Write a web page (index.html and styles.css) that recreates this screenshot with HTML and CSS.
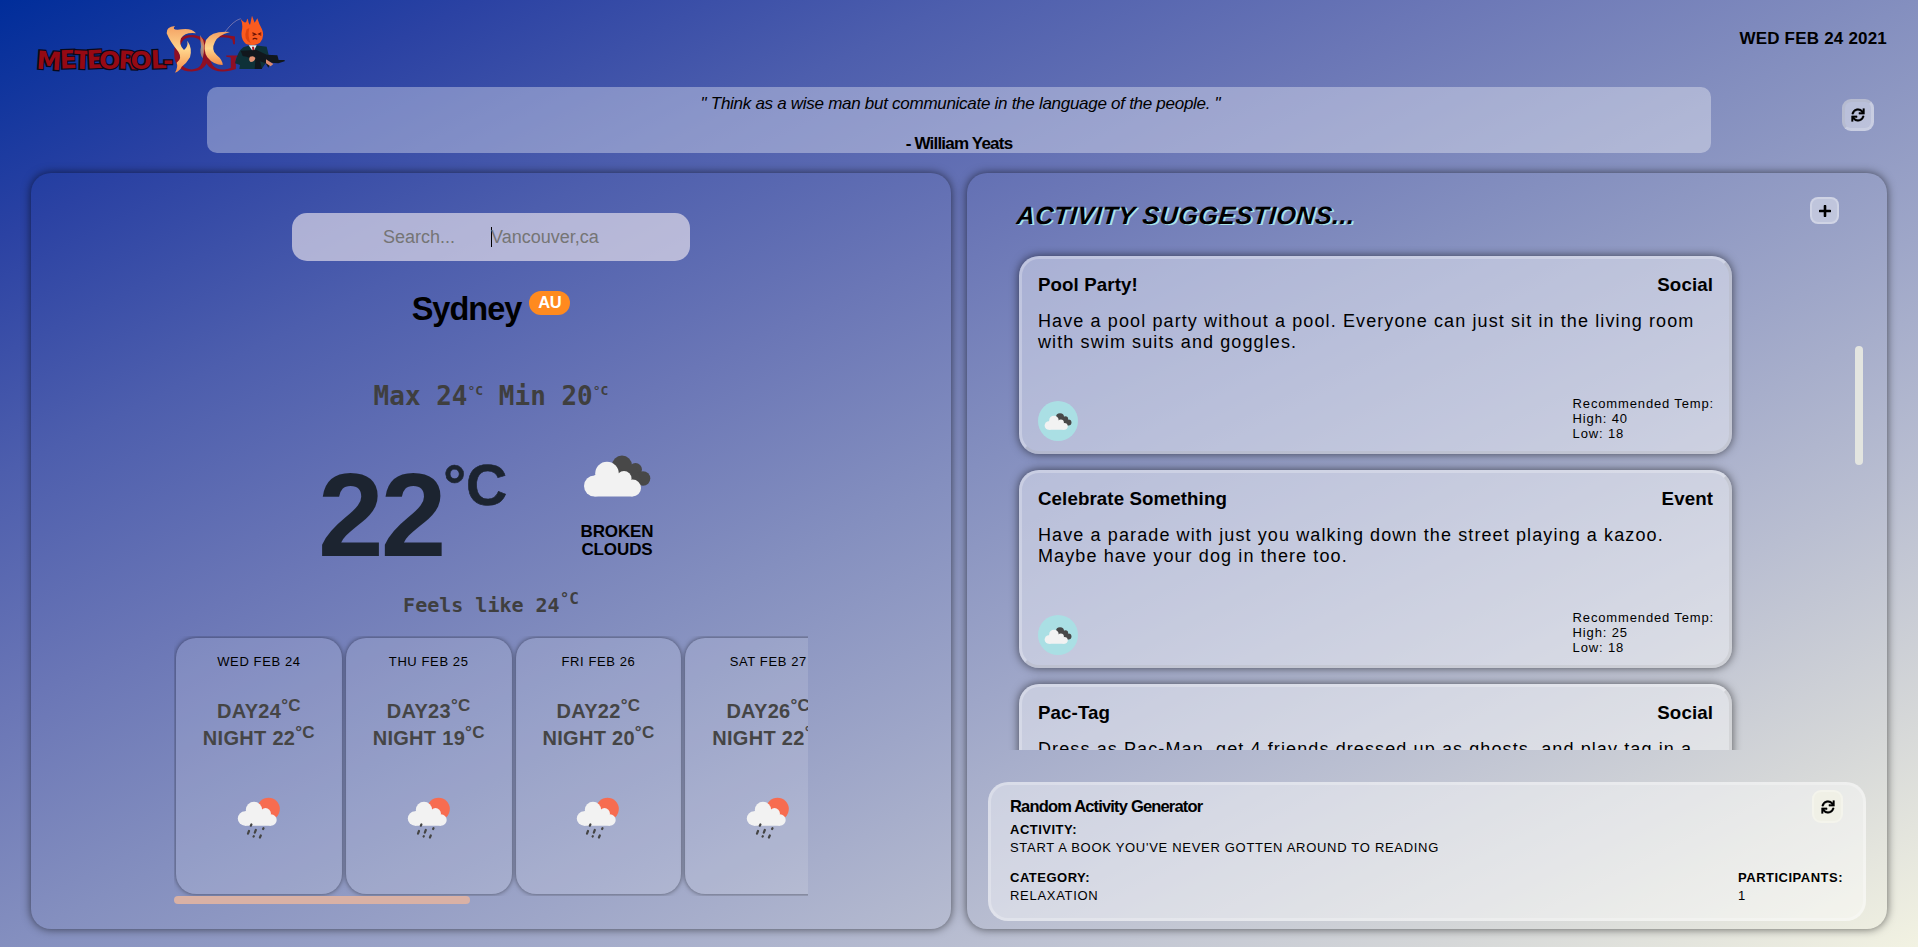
FILE: index.html
```html
<!DOCTYPE html>
<html lang="en">
<head>
<meta charset="utf-8">
<title>Meteorol-OG</title>
<link rel="stylesheet" href="styles.css">
</head>
<body>
<svg class="defs" width="0" height="0" aria-hidden="true">
  <symbol id="broken-clouds" viewBox="0 0 68 42">
    <g fill="#484848"><circle cx="39" cy="10.500" r="10"/><circle cx="52.500" cy="14.500" r="6.500"/><circle cx="60" cy="23.500" r="7.300"/><path d="M38 12h15l7 18H44z"/></g>
    <g fill="#f2f2f2"><circle cx="11.500" cy="31" r="10.500"/><circle cx="24" cy="18.500" r="11.800"/><circle cx="41" cy="23.500" r="7.500"/><circle cx="49.500" cy="33" r="8.500"/><path d="M11.500 20h30v7l8 4v10.500h-38z"/></g>
  </symbol>
  <symbol id="rain-sun" viewBox="0 0 44 44">
    <circle cx="31.500" cy="12" r="11.300" fill="#f76c50"/>
    <g fill="#f2f2f2"><circle cx="8" cy="21.500" r="7.200"/><circle cx="17" cy="13" r="8.200"/><circle cx="28.500" cy="16.500" r="5.400"/><circle cx="34" cy="23" r="5.700"/><path d="M8 14.300h21l5 4v10.400H8z"/></g>
    <g stroke="#454545" stroke-width="2.200" stroke-linecap="round"><path d="M14.400 27.500l-.6 1.200M12 34l-1 2.600M18.800 33l-1 2.600M26.500 31.200l-.4.8M16.800 39.200l-.2.400M23.800 38.500l-.9 2"/></g>
  </symbol>
  <symbol id="sync" viewBox="-16 -16 544 544">
    <path stroke="#000" stroke-width="8" d="M440.650 12.570l4 82.770A247.160 247.160 0 0 0 255.830 8C134.730 8 33.910 94.920 12.290 209.820A12 12 0 0 0 24.090 224h49.050a12 12 0 0 0 11.670-9.260 175.910 175.910 0 0 1 317-56.940l-101.460-4.860a12 12 0 0 0-12.570 12v47.410a12 12 0 0 0 12 12H500a12 12 0 0 0 12-12V12a12 12 0 0 0-12-12h-47.370a12 12 0 0 0-11.980 12.570zM255.830 432a175.610 175.610 0 0 1-146-77.800l101.800 4.870a12 12 0 0 0 12.570-12v-47.400a12 12 0 0 0-12-12H12a12 12 0 0 0-12 12V500a12 12 0 0 0 12 12h47.350a12 12 0 0 0 12-12.600l-4.150-82.570A247.170 247.170 0 0 0 255.830 504c121.110 0 221.930-86.920 243.550-201.820a12 12 0 0 0-11.800-14.180h-49.050a12 12 0 0 0-11.670 9.260A175.860 175.860 0 0 1 255.830 432z"/>
  </symbol>
</svg>

<header class="top">
  <svg class="logo" viewBox="0 0 254 62" width="254" height="62">
    <defs><linearGradient id="flame" x1="0" y1="0" x2="0" y2="1"><stop offset="0" stop-color="#f3a063"/><stop offset=".5" stop-color="#ffd68d"/><stop offset="1" stop-color="#f58c48"/></linearGradient></defs>
    <text class="logo-word" y="54.500" x="2 26 39.500 53 65 84 96.500 117 129" rotate="4 -2 2 -3 0 3 0 -2 0">METEOROL-</text>
    <text class="logo-og" x="138" y="56.500" textLength="69">OG</text>
    <g transform="translate(-34 -14) scale(.33333)">
      <g fill="url(#flame)">
        <path d="M500 100Q498 80 525 78Q512 92 545 88Q575 84 588 100Q555 96 543 115Q535 135 552 150Q565 140 562 122Q578 145 570 172Q560 190 545 200Q540 212 525 218Q535 200 530 188Q548 175 535 155Q510 125 500 100Z"/>
        <path d="M618 120Q635 92 690 96Q655 105 645 125Q632 150 650 165Q668 180 668 195Q640 195 622 172Q608 150 618 120Z"/>
        <path d="M600 105Q622 130 608 175Q598 160 603 140Z" opacity=".6"/>
      </g>
      <path d="M675 96Q700 62 722 56" stroke="#9a8db6" stroke-width="2" fill="none"/>
      <path d="M705 190Q712 155 730 142L750 136H765L800 140L806 165L800 185L785 207H718L720 195Z" fill="#0e3138"/>
      <path d="M746 136H770L760 156Z" fill="#e9edf2"/><path d="M756 140H762L764 152L758 156Z" fill="#b21b25"/>
      <path d="M722 56Q737 75 740 62Q742 48 746 68L750 75L756 47L764 68L772 55Q778 75 786 88Q795 110 780 128Q760 140 738 132Q722 118 725 95Q730 75 722 56Z" fill="#fb5b1f"/>
      <path d="M740 88Q728 118 752 130Q742 108 748 84Z" fill="#e0440f"/>
      <path d="M757 98L767 103L758 106M784 98L776 102L784 106M758 118Q764 112 772 118" stroke="#681306" stroke-width="3.500" fill="none"/>
      <path d="M722 152L770 150L800 164L832 166L836 180L854 180V184L835 190L812 188L805 203L797 190L780 184L786 207H764L766 182L740 170L728 168Z" fill="#11171d"/>
      <path d="M750 170Q762 166 766 174Q764 186 752 186Q744 180 750 170Z" fill="#e39274"/><path d="M798 178L820 192L812 199L798 190Z" fill="#dc8b70"/>
    </g>
  </svg>
  <div class="today">WED FEB 24 2021</div>
</header>

<section class="quote-row">
  <div class="quote"><p class="quote-text">" Think as a wise man but communicate in the language of the people. "</p><p class="quote-author">- William Yeats</p></div>
  <button class="btn btn-quote" aria-label="New quote"><svg width="14" height="14"><use href="#sync"/></svg></button>
</section>

<main class="panels">
  <section class="panel weather">
    <form class="search"><span>Search...</span><span class="caret"></span><span>Vancouver,ca</span></form>
    <div class="city"><h1>Sydney</h1><span class="country">AU</span></div>
    <div class="range">Max 24<sup>°C</sup> Min 20<sup>°C</sup></div>
    <div class="now">
      <div class="temp">22<sup>°C</sup></div>
      <div class="cond"><svg width="68" height="42"><use href="#broken-clouds"/></svg><span>BROKEN CLOUDS</span></div>
    </div>
    <div class="feels">Feels like 24<sup>°C</sup></div>
    <div class="forecast">
      <div class="days">
        <article class="day"><time>WED FEB 24</time><p>DAY24<sup>°C</sup><br>NIGHT 22<sup>°C</sup></p><svg width="44" height="44"><use href="#rain-sun"/></svg></article>
        <article class="day"><time>THU FEB 25</time><p>DAY23<sup>°C</sup><br>NIGHT 19<sup>°C</sup></p><svg width="44" height="44"><use href="#rain-sun"/></svg></article>
        <article class="day"><time>FRI FEB 26</time><p>DAY22<sup>°C</sup><br>NIGHT 20<sup>°C</sup></p><svg width="44" height="44"><use href="#rain-sun"/></svg></article>
        <article class="day"><time>SAT FEB 27</time><p>DAY26<sup>°C</sup><br>NIGHT 22<sup>°C</sup></p><svg width="44" height="44"><use href="#rain-sun"/></svg></article>
      </div>
      <div class="bar-x"></div>
    </div>
  </section>

  <section class="panel activities">
    <div class="act-head"><h2>ACTIVITY SUGGESTIONS...</h2><button class="btn btn-add" aria-label="Add activity"><svg width="12" height="12" viewBox="0 0 12 12"><path d="M6 1v10M1 6h10" stroke="#000" stroke-width="2.600" stroke-linecap="round"/></svg></button></div>
    <div class="act-body">
      <div class="act-list">
        <article class="act">
          <div class="act-row"><h3>Pool Party!</h3><h3>Social</h3></div>
          <p>Have a pool party without a pool. Everyone can just sit in the living room with swim suits and goggles.</p>
          <div class="act-foot"><span class="badge"><svg width="28" height="17"><use href="#broken-clouds"/></svg></span><div class="rec">Recommended Temp:<br>High: 40<br>Low: 18</div></div>
        </article>
        <article class="act">
          <div class="act-row"><h3>Celebrate Something</h3><h3>Event</h3></div>
          <p>Have a parade with just you walking down the street playing a kazoo. Maybe have your dog in there too.</p>
          <div class="act-foot"><span class="badge"><svg width="28" height="17"><use href="#broken-clouds"/></svg></span><div class="rec">Recommended Temp:<br>High: 25<br>Low: 18</div></div>
        </article>
        <article class="act">
          <div class="act-row"><h3>Pac-Tag</h3><h3>Social</h3></div>
          <p>Dress as Pac-Man, get 4 friends dressed up as ghosts, and play tag in a</p>
        </article>
      </div>
      <div class="bar-y"></div>
    </div>
    <div class="random">
      <div class="rand-head"><h4>Random Activity Generator</h4><button class="btn btn-rand" aria-label="New activity"><svg width="14" height="14"><use href="#sync"/></svg></button></div>
      <div class="field activity"><b>ACTIVITY:</b><span>START A BOOK YOU'VE NEVER GOTTEN AROUND TO READING</span></div>
      <div class="rand-foot">
        <div class="field"><b>CATEGORY:</b><span>RELAXATION</span></div>
        <div class="field"><b>PARTICIPANTS:</b><span>1</span></div>
      </div>
    </div>
  </section>
</main>
</body>
</html>
```
FILE: styles.css
```css
* { box-sizing: border-box; margin: 0; padding: 0; }
body {
  height: 947px;
  overflow: hidden;
  font-family: "Liberation Sans", Arial, sans-serif;
  color: #000;
  background: linear-gradient(to right bottom, #002d9a 0%, #2b42a3 12.5%, #4d5ead 25%, #6a76b6 37.5%, #848fbf 50%, #9ea6c8 62.5%, #b9bed1 75%, #d5d7d8 87.5%, #f2f2e2 100%);
}
.defs { display: block; }
sup { line-height: 0; vertical-align: baseline; position: relative; }

.top { height: 87px; display: flex; justify-content: space-between; align-items: flex-start; padding: 14px 31px 0 34px; }
.logo { overflow: visible; }
.logo-word { font: bold 25px "DejaVu Sans", sans-serif; fill: #960913; stroke: #07091c; stroke-width: 2.5px; paint-order: stroke; }
.logo-og { font: 54px "Liberation Serif", serif; fill: #8f0f24; }
.today { font-size: 17px; line-height: 20px; font-weight: bold; letter-spacing: .2px; padding-top: 15px; }

.quote-row { height: 86px; display: flex; align-items: flex-start; padding: 0 44px 0 207px; justify-content: space-between; }
.quote { width: 1504px; height: 66px; border-radius: 10px; background: rgba(255,255,255,.35); text-align: center; font-size: 17px; line-height: 20px; padding-top: 7px; }
.quote-text { font-style: italic; letter-spacing: -.28px; padding-left: 3px; }
.quote-author { font-weight: bold; letter-spacing: -.8px; margin-top: 20px; }
.btn { display: flex; align-items: center; justify-content: center; border-radius: 9px; }
.btn-quote { width: 32px; height: 32px; margin-top: 12px; background: rgba(255,255,255,.4); border: 3px inset rgba(255,255,255,.2); }

.panels { height: 756px; display: flex; gap: 16px; padding: 0 31px 0 31px; }
.panel { flex: 1; border-radius: 20px; box-shadow: 0 0 10px rgba(0,0,0,.6); display: flex; flex-direction: column; }

.weather { align-items: center; }
.search { width: 398px; height: 48px; margin-top: 40px; border-radius: 15px; background: rgba(248,240,244,.6); display: flex; align-items: center; padding-left: 91px; font-size: 18px; color: #757575; }
.caret { width: 1px; height: 20px; background: #000; margin: 0 -1px 0 36px; }
.city { display: flex; gap: 8px; align-items: flex-start; margin-top: 30px; }
.city h1 { font-size: 32.500px; line-height: 36px; letter-spacing: -1px; }
.country { width: 41px; text-align: center; height: 24px; border-radius: 12px; background: #ff8a1f; color: #fff; font-weight: bold; font-size: 16.500px; letter-spacing: -.3px; line-height: 22px; }
.range, .feels { font-family: "DejaVu Sans Mono", monospace; font-weight: bold; color: #3f3f3f; white-space: pre; }
.range { font-size: 26px; line-height: 30px; margin-top: 54px; }
.range sup { font-size: 13px; top: -10px; }
.now { width: 336px; height: 120px; margin: 44px 0 0 -10px; display: flex; justify-content: space-between; }
.temp { font-size: 118px; line-height: 120px; font-weight: bold; color: #1c2430; letter-spacing: -3px; white-space: nowrap; }
.temp sup { font-size: 57px; top: -51px; letter-spacing: 0; -webkit-text-stroke: .6px #1c2430; }
.cond { width: 74px; display: flex; flex-direction: column; align-items: center; font-size: 17px; line-height: 18px; font-weight: bold; text-align: center; letter-spacing: -.1px; }
.cond span { margin-top: 26px; }
.feels { font-size: 20px; line-height: 24px; margin-top: 18px; }
.feels sup { font-size: 16px; top: -8px; }
.forecast { width: 634px; margin-top: 19px; }
.days { height: 260px; overflow: hidden; display: flex; gap: 4px; padding: 2px; }
.day { flex: 0 0 165.8px; height: 256px; border-radius: 20px; background: rgba(255,255,255,.13); box-shadow: 0 0 5px rgba(0,0,0,.5); display: flex; flex-direction: column; align-items: center; padding-top: 16px; text-align: center; }
.day time { font-size: 13px; line-height: 16px; letter-spacing: .6px; }
.day p { font-size: 20px; line-height: 27px; font-weight: bold; color: #454545; margin-top: 28px; letter-spacing: .3px; white-space: nowrap; }
.day p sup { font-size: 17px; top: -7px; }
.day svg { margin-top: 45px; }
.bar-x { width: 296px; height: 8px; border-radius: 4px; background: #d9b1a5; }

.act-head { height: 73px; display: flex; justify-content: space-between; align-items: flex-start; padding: 24px 48px 0 49px; }
.act-head h2 { font-size: 25px; line-height: 30px; margin-top: 3px; font-style: italic; letter-spacing: .6px; text-shadow: 2px 1px #a9e4ea; transform: skewX(-5deg); transform-origin: 0 80%; }
.btn-add { width: 29px; height: 27px; background: rgba(255,255,255,.4); border: 2px solid rgba(255,255,255,.25); border-radius: 8px; }
.act-body { height: 504px; display: flex; overflow: hidden; padding: 10px 24px 0 52px; justify-content: space-between; }
.act-list { width: 713px; }
.act { height: 198px; margin-bottom: 16px; border-radius: 20px; border: 3px outset rgba(255,255,255,.25); background: rgba(255,255,255,.4); box-shadow: 0 0 10px rgba(0,0,0,.6); padding: 16px; display: flex; flex-direction: column; }
.act-row { display: flex; justify-content: space-between; }
.act h3 { font-size: 18.720px; line-height: 20px; letter-spacing: .1px; }
.act p { font-size: 18px; line-height: 21px; letter-spacing: 1.11px; margin: 16px -2px 0 0; }
.act-foot { margin-top: auto; display: flex; justify-content: space-between; align-items: flex-end; margin-bottom: -6px; }
.badge { width: 40px; height: 40px; border-radius: 50%; background: #aadfe4; display: flex; align-items: center; justify-content: center; }
.rec { font-size: 13px; line-height: 15px; letter-spacing: .85px; margin-right: -1px; }
.bar-y { width: 8px; height: 119px; margin-top: 90px; border-radius: 4px; background: #e3e5e0; }
.random { width: 878px; height: 139px; margin: 32px 0 0 21px; border-radius: 20px; border: 3px solid rgba(255,255,255,.25); background: rgba(255,255,255,.42); padding: 5px 20px 0 19px; }
.rand-head { display: flex; justify-content: space-between; height: 35px; }
.rand-head h4 { font-size: 16.500px; line-height: 20px; letter-spacing: -.83px; margin-top: 6px; }
.btn-rand { width: 31px; height: 33px; background: #f0f0e6; border: 2px solid #f4f4ec; }
.field { display: flex; flex-direction: column; font-size: 13px; line-height: 18px; letter-spacing: .5px; }
.field span { letter-spacing: .7px; }
.activity { margin-top: -4px; }
.rand-foot { display: flex; justify-content: space-between; margin-top: 12px; }
```
